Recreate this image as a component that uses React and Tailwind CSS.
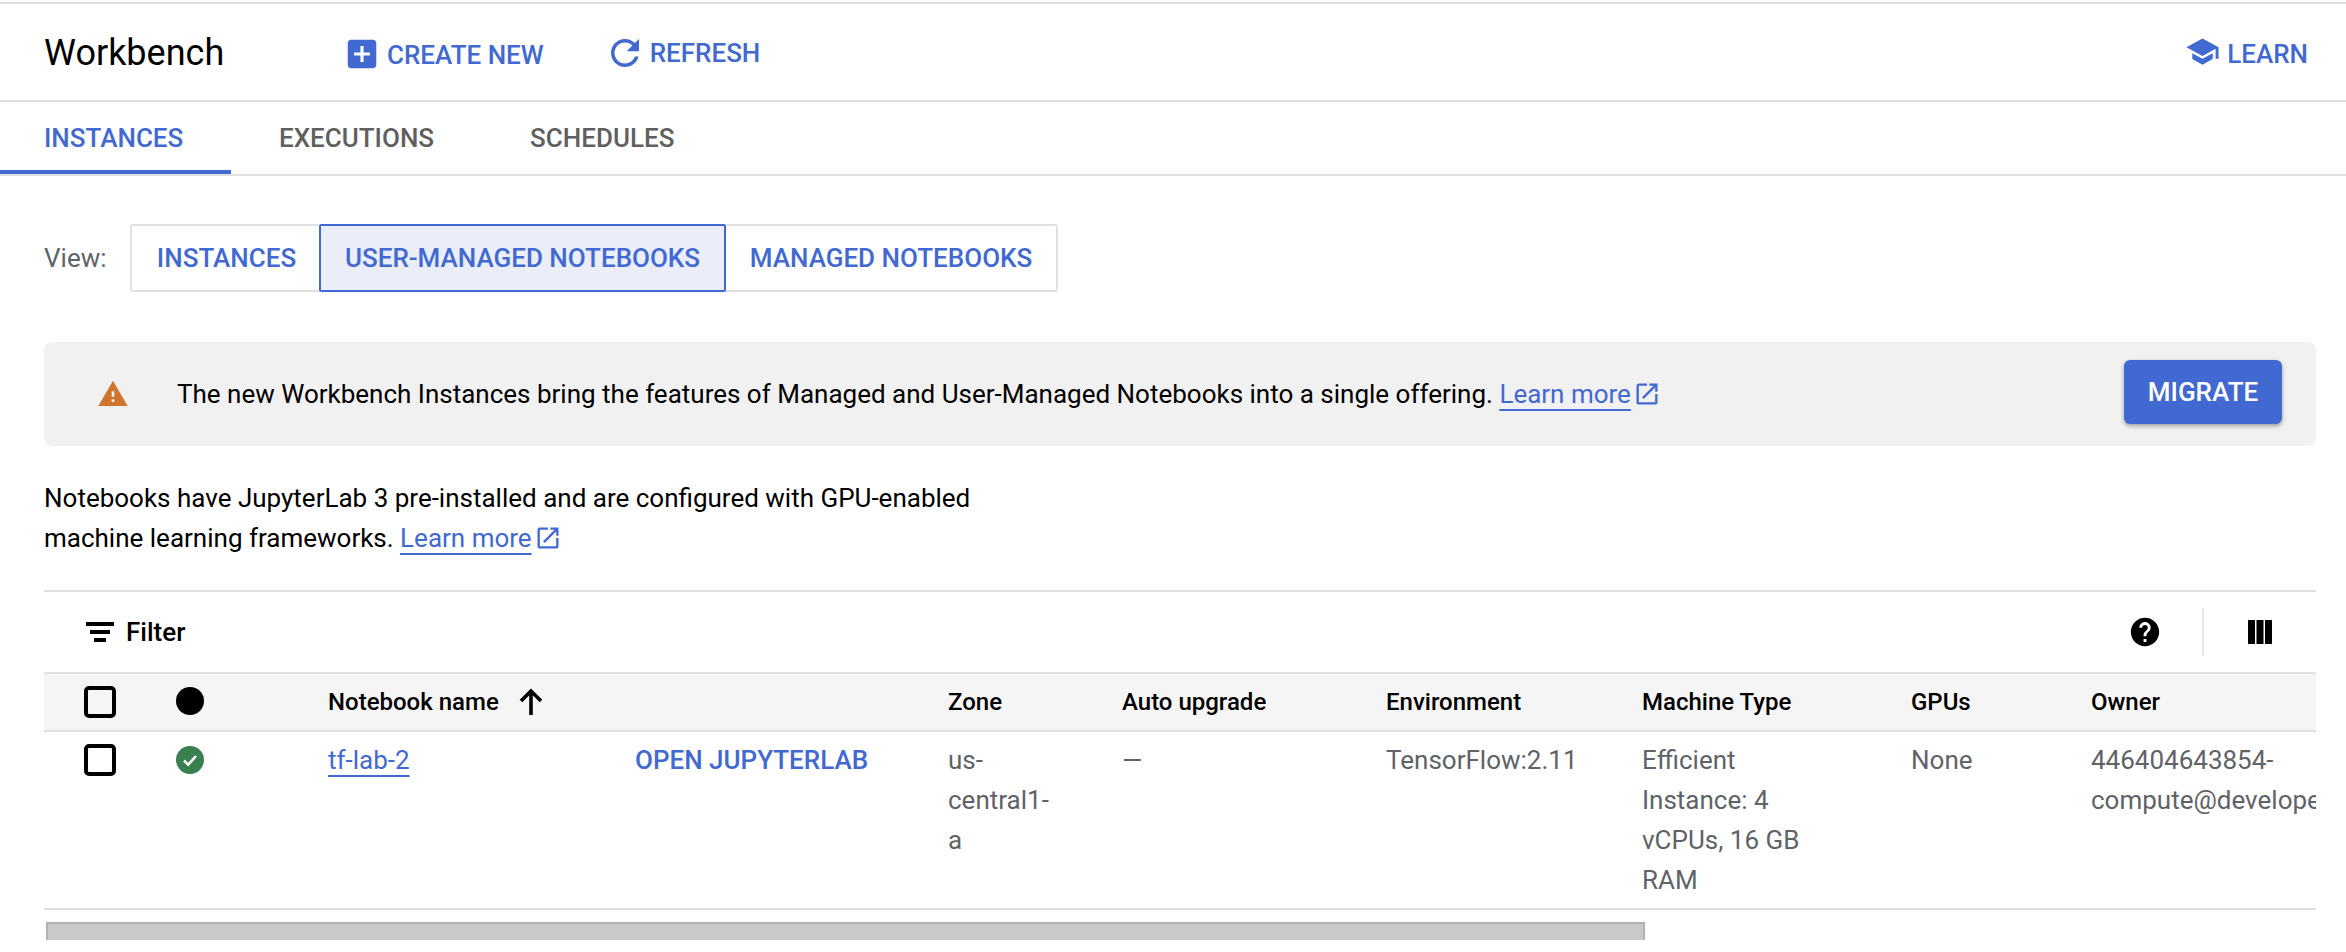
const Icon = ({ d, size, className = '', color = 'currentColor' }) => (
  <svg width={size} height={size} viewBox="0 0 24 24" fill={color} className={`shrink-0 ${className}`}>
    <path d={d} />
  </svg>
)

const paths = {
  add: 'M19 3H5c-1.11 0-2 .9-2 2v14c0 1.1.89 2 2 2h14c1.1 0 2-.9 2-2V5c0-1.1-.9-2-2-2zm-2 10h-4v4h-2v-4H7v-2h4V7h2v4h4v2z',
  refresh: 'M17.65 6.35C16.2 4.9 14.21 4 12 4c-4.42 0-7.99 3.58-7.99 8s3.57 8 7.99 8c3.73 0 6.84-2.55 7.73-6h-2.08c-.82 2.33-3.04 4-5.65 4-3.31 0-6-2.69-6-6s2.69-6 6-6c1.66 0 3.14.69 4.22 1.78L13 11h7V4l-2.35 2.35z',
  school: 'M5 13.18v4L12 21l7-3.82v-4L12 17l-7-3.82zM12 3L1 9l11 6 9-4.91V17h2V9L12 3z',
  warning: 'M1 21h22L12 2 1 21zm12-3h-2v-2h2v2zm0-4h-2v-4h2v4z',
  open: 'M19 19H5V5h7V3H5c-1.11 0-2 .9-2 2v14c0 1.1.89 2 2 2h14c1.1 0 2-.9 2-2v-7h-2v7zM14 3v2h3.59l-9.83 9.83 1.41 1.41L19 6.41V10h2V3h-7z',
  help: 'M12 2C6.48 2 2 6.48 2 12s4.48 10 10 10 10-4.48 10-10S17.52 2 12 2zm1 17h-2v-2h2v2zm2.07-7.75l-.9.92C13.45 12.9 13 13.5 13 15h-2v-.5c0-1.1.45-2.1 1.17-2.83l1.24-1.26c.37-.36.59-.86.59-1.41 0-1.1-.9-2-2-2s-2 .9-2 2H8c0-2.21 1.79-4 4-4s4 1.79 4 4c0 .88-.36 1.68-.93 2.25z',
  columns: 'M0 0h7v24H0zM8.5 0h7v24h-7zM17 0h7v24h-7z',
}

function LearnMore() {
  return (
    <span className="inline-flex items-center text-[#4169d1]">
      <a href="#" className="underline decoration-2 underline-offset-[6px]">Learn more</a>
      <Icon d={paths.open} size={28} className="ml-[2px]" />
    </span>
  )
}

const Checkbox = () => <div className="w-8 h-8 border-[4px] border-black rounded-[5px] box-border" />

// column widths taken from the header positions
const cols = {
  check: 'w-[132px] pl-[40px]',
  status: 'w-[152px]',
  name: 'w-[307px]',
  action: 'w-[313px]',
  zone: 'w-[174px] pr-[62px]',
  auto: 'w-[264px]',
  env: 'w-[256px]',
  machine: 'w-[269px] pr-[80px]',
  gpus: 'w-[180px]',
  owner: 'w-[420px]',
}

export default function App() {
  return (
    <div className="w-[2346px] h-[952px] overflow-hidden bg-white text-black font-['Roboto',sans-serif] text-[26px] leading-[40px]">
      <div className="mt-[2px] h-[2px] bg-[#dddde3]" />

      {/* Title bar */}
      <div className="h-[98px] flex items-center border-b-2 border-[#e0e0e0] pb-[2px]">
        <h1 className="ml-[44px] w-[304px] text-[36px] font-normal leading-[44px] mt-[4px]">Workbench</h1>
        <button className="flex items-center font-medium text-[#4169d1] mt-[5px]">
          <Icon d={paths.add} size={38} className="-ml-[5px]" />
          <span className="ml-[6px] mt-[2px]">CREATE NEW</span>
        </button>
        <button className="flex items-center font-medium text-[#4169d1] ml-[60px] mt-[4px]">
          <Icon d={paths.refresh} size={42} />
          <span className="ml-[4px]">REFRESH</span>
        </button>
        <button className="ml-auto mr-[38px] flex items-center font-medium text-[#4169d1] mt-[6px]">
          <Icon d={paths.school} size={35} className="-mt-[5px]" />
          <span className="ml-[7px]">LEARN</span>
        </button>
      </div>

      {/* Tabs */}
      <div className="h-[74px] flex border-b-2 border-[#e0e0e0] font-medium">
        <div className="w-[231px] pl-[44px] pt-[4px] h-[72px] border-b-4 border-[#4169d1] text-[#4169d1] flex items-center">INSTANCES</div>
        <div className="px-[48px] flex items-center text-[#5f5f5f]">EXECUTIONS</div>
        <div className="px-[48px] flex items-center text-[#5f5f5f]">SCHEDULES</div>
      </div>

      <div className="pl-[44px] pr-[30px]">
        {/* View switcher */}
        <div className="mt-[48px] flex items-center h-[68px]">
          <span className="w-[86px] text-[#5f6368]">View:</span>
          <div className="flex h-full font-medium text-[#4169d1]">
            <div className="w-[189px] pl-[2px] flex items-center justify-center border-2 border-r-0 border-[#e0e0e0] rounded-l-[3px]">INSTANCES</div>
            <div className="w-[407px] flex items-center justify-center border-2 border-[#4169d1] bg-[#ebeef9] rounded-[2px]">USER-MANAGED NOTEBOOKS</div>
            <div className="w-[332px] flex items-center justify-center border-2 border-l-0 border-[#e0e0e0] rounded-r-[3px]">MANAGED NOTEBOOKS</div>
          </div>
        </div>

        {/* Migration banner */}
        <div className="mt-[50px] h-[104px] rounded-[8px] bg-[#f1f1f1] flex items-center pl-[53px] pr-[34px]">
          <Icon d={paths.warning} size={32} color="#d0752b" className="mr-[48px]" />
          <p>
            The new Workbench Instances bring the features of Managed and User-Managed Notebooks into a single offering.{' '}
            <LearnMore />
          </p>
          <button className="ml-auto w-[158px] h-[64px] -mt-[4px] rounded-[6px] bg-[#4169d1] text-white font-medium shadow-[0_2px_4px_rgba(0,0,0,0.35)]">MIGRATE</button>
        </div>

        <p className="mt-[32px]">
          Notebooks have JupyterLab 3 pre-installed and are configured with GPU-enabled
          <br />
          machine learning frameworks. <LearnMore />
        </p>

        {/* Notebook table */}
        <div className="mt-[32px] border-t-2 border-[#e0e0e0] overflow-hidden">
          <div className="h-[80px] flex items-center pl-[42px] pr-[44px]">
            <svg width="28" height="20" viewBox="0 0 28 20" className="shrink-0">
              <path d="M0 0h28v4H0zM4 8h20v4H4zM8 16h12v4H8z" />
            </svg>
            <span className="ml-[12px] font-medium">Filter</span>
            <Icon d={paths.help} size={34} className="ml-auto" />
            <div className="w-[2px] h-[48px] bg-[#e8e8e8] ml-[40px] mr-[44px]" />
            <Icon d={paths.columns} size={24} />
          </div>

          <div className="flex w-max h-[60px] items-center bg-[#f5f5f5] border-y-2 border-[#e0e0e0] font-medium text-[24px]">
            <div className={cols.check}><Checkbox /></div>
            <div className={cols.status}><div className="w-7 h-7 rounded-full bg-black -mt-[2px]" /></div>
            <div className={`${cols.name} flex items-center`}>
              Notebook name
              <svg width="24" height="27" viewBox="0 0 24 27" className="shrink-0 ml-[20px] -mt-[2px]">
                <path d="M12 27V3M2 13L12 3l10 10" fill="none" stroke="#000" strokeWidth="3.6" />
              </svg>
            </div>
            <div className={cols.action} />
            <div className={cols.zone}>Zone</div>
            <div className={cols.auto}>Auto upgrade</div>
            <div className={cols.env}>Environment</div>
            <div className={cols.machine}>Machine Type</div>
            <div className={cols.gpus}>GPUs</div>
            <div className={cols.owner}>Owner</div>
          </div>

          <div className="flex w-max h-[178px] items-start pt-[8px] border-b-2 border-[#e0e0e0] text-[#5f6368]">
            <div className={`${cols.check} pt-[4px]`}><Checkbox /></div>
            <div className={`${cols.status} pt-[6px]`}>
              <svg width="28" height="28" viewBox="0 0 28 28">
                <circle cx="14" cy="14" r="14" fill="#3a7f4f" />
                <path d="M8 14.5l4.2 4.2L20 10" fill="none" stroke="#fff" strokeWidth="2.6" />
              </svg>
            </div>
            <div className={cols.name}>
              <a href="#" className="text-[#4169d1] underline decoration-2 underline-offset-[6px]">tf-lab-2</a>
            </div>
            <div className={`${cols.action} font-medium text-[#4169d1]`}>OPEN JUPYTERLAB</div>
            <div className={cols.zone}>us-central1-a</div>
            <div className={cols.auto}>—</div>
            <div className={cols.env}>TensorFlow:2.11</div>
            <div className={cols.machine}>Efficient Instance: 4 vCPUs, 16 GB RAM</div>
            <div className={cols.gpus}>None</div>
            <div className={cols.owner}>446404643854-compute@developer.gserviceaccount.com</div>
          </div>

          {/* Horizontal scrollbar */}
          <div className="mt-[12px] ml-[2px] w-[1599px] h-[18px] bg-[#c9c9c9] border-t-2 border-x-2 border-[#b2b2b2]" />
        </div>
      </div>
    </div>
  )
}
